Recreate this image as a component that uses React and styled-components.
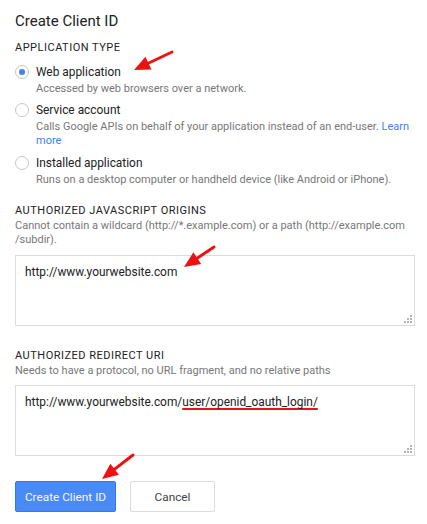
import React from "react";
import styled, { createGlobalStyle } from "styled-components";

const Global = createGlobalStyle`
  html, body { margin: 0; padding: 0; background: #fff; }
  body { font-family: Roboto, "Liberation Sans", Arial, sans-serif; color: #222; }
`;

const Page = styled.div`
  position: relative;
  width: 400px;
  padding: 11px 0 12px 15px;
`;

const Title = styled.h1`
  margin: 0;
  font-size: 15px;
  line-height: 20px;
  font-weight: 400;
  color: #222;
`;

const SectionLabel = styled.div`
  margin-top: ${(p) => p.$mt}px;
  font-size: 11px;
  line-height: 16px;
  text-transform: uppercase;
  letter-spacing: 0.5px;
  color: #222;
`;

const Hint = styled.div`
  margin-top: ${(p) => p.$mt || 0}px;
  font-size: 11px;
  line-height: 14px;
  color: #777;
`;

const Option = styled.label`
  display: grid;
  grid-template-columns: 21px 1fr;
  margin-top: ${(p) => p.$mt}px;
`;

const Radio = styled.span`
  box-sizing: border-box;
  width: 14px;
  height: 14px;
  margin-top: 1px;
  border-radius: 50%;
  border: 1px solid #c6c6c6;
  background: #fff;
  display: flex;
  align-items: center;
  justify-content: center;
  &::after {
    content: "";
    width: 6px;
    height: 6px;
    border-radius: 50%;
    background: ${(p) => (p.$checked ? "#4285f4" : "transparent")};
  }
`;

const OptionText = styled.div`
  display: flex;
  flex-direction: column;
`;

const OptionName = styled.span`
  font-size: 11.9px;
  line-height: 16px;
  color: #222;
`;

const Link = styled.a`
  color: #427fed;
  text-decoration: none;
`;

const Field = styled.div`
  position: relative;
  box-sizing: border-box;
  margin-top: ${(p) => p.$mt}px;
  width: 400px;
  height: 71px;
  border: 1px solid #dcdcdc;
  padding: 8px 9px;
  font-size: 11.9px;
  line-height: 16px;
  color: #222;
`;

const Marked = styled.span`
  text-decoration: underline;
  text-decoration-color: #e8141b;
  text-decoration-thickness: 2px;
  text-underline-offset: 2px;
`;

const Grip = styled.svg`
  position: absolute;
  right: 2px;
  bottom: 2px;
`;

const Buttons = styled.div`
  display: flex;
  gap: 14px;
  margin-top: 25px;
`;

const Button = styled.button`
  box-sizing: border-box;
  height: 31px;
  width: ${(p) => p.$w}px;
  padding: 0;
  border-radius: 2px;
  font-family: Roboto, "Liberation Sans", Arial, sans-serif;
  font-size: 11.8px;
  border: 1px solid ${(p) => (p.$primary ? "#3079ed" : "#dcdcdc")};
  background: ${(p) => (p.$primary ? "#4a8af4" : "#fff")};
  color: ${(p) => (p.$primary ? "#f4f8ff" : "#444")};
`;

const Annotations = styled.svg`
  position: absolute;
  left: 0;
  top: 0;
  pointer-events: none;
`;

function GripIcon() {
  return (
    <Grip width="8" height="8" viewBox="0 0 8 8">
      <g fill="#b5b5b5">
        <rect x="6" y="0" width="2" height="2" />
        <rect x="3" y="3" width="2" height="2" />
        <rect x="6" y="3" width="2" height="2" />
        <rect x="0" y="6" width="2" height="2" />
        <rect x="3" y="6" width="2" height="2" />
        <rect x="6" y="6" width="2" height="2" />
      </g>
    </Grip>
  );
}

function Arrow({ x1, y1, x2, y2 }) {
  const dx = x2 - x1;
  const dy = y2 - y1;
  const len = Math.hypot(dx, dy);
  const ux = dx / len;
  const uy = dy / len;
  const hl = 16;
  const hw = 7;
  const bx = x2 - ux * hl;
  const by = y2 - uy * hl;
  const px = -uy * hw;
  const py = ux * hw;
  return (
    <g>
      <line x1={x1} y1={y1} x2={bx + ux * 2} y2={by + uy * 2} stroke="#ee1111" strokeWidth="3" strokeLinecap="round" />
      <polygon points={`${x2},${y2} ${bx + px},${by + py} ${bx - px},${by - py}`} fill="#ee1111" />
    </g>
  );
}

export default function App() {
  return (
    <>
      <Global />
      <Page>
        <Title>Create Client ID</Title>
        <SectionLabel $mt={9}>Application type</SectionLabel>

        <Option $mt={8}>
          <Radio $checked />
          <OptionText>
            <OptionName>Web application</OptionName>
            <Hint $mt={2}>Accessed by web browsers over a network.</Hint>
          </OptionText>
        </Option>
        <Option $mt={6}>
          <Radio />
          <OptionText>
            <OptionName>Service account</OptionName>
            <Hint $mt={2}>
              Calls Google APIs on behalf of your application instead of an end-user.{" "}
              <Link href="#">Learn more</Link>
            </Hint>
          </OptionText>
        </Option>
        <Option $mt={7}>
          <Radio />
          <OptionText>
            <OptionName>Installed application</OptionName>
            <Hint $mt={2}>Runs on a desktop computer or handheld device (like Android or iPhone).</Hint>
          </OptionText>
        </Option>

        <SectionLabel $mt={16}>Authorized JavaScript origins</SectionLabel>
        <Hint>Cannot contain a wildcard (http://*.example.com) or a path (http://example.com /subdir).</Hint>
        <Field $mt={8}>
          http://www.yourwebsite.com
          <GripIcon />
        </Field>

        <SectionLabel $mt={22}>Authorized redirect URI</SectionLabel>
        <Hint>Needs to have a protocol, no URL fragment, and no relative paths</Hint>
        <Field $mt={7}>
          http://www.yourwebsite.com/<Marked>user/openid_oauth_login/</Marked>
          <GripIcon />
        </Field>

        <Buttons>
          <Button $primary $w={101}>Create Client ID</Button>
          <Button $w={85}>Cancel</Button>
        </Buttons>

        <Annotations width="427" height="524">
          <Arrow x1={172} y1={52} x2={134} y2={70} />
          <Arrow x1={214} y1={247} x2={184} y2={267} />
          <Arrow x1={133} y1={455} x2={102} y2={479} />
        </Annotations>
      </Page>
    </>
  );
}
